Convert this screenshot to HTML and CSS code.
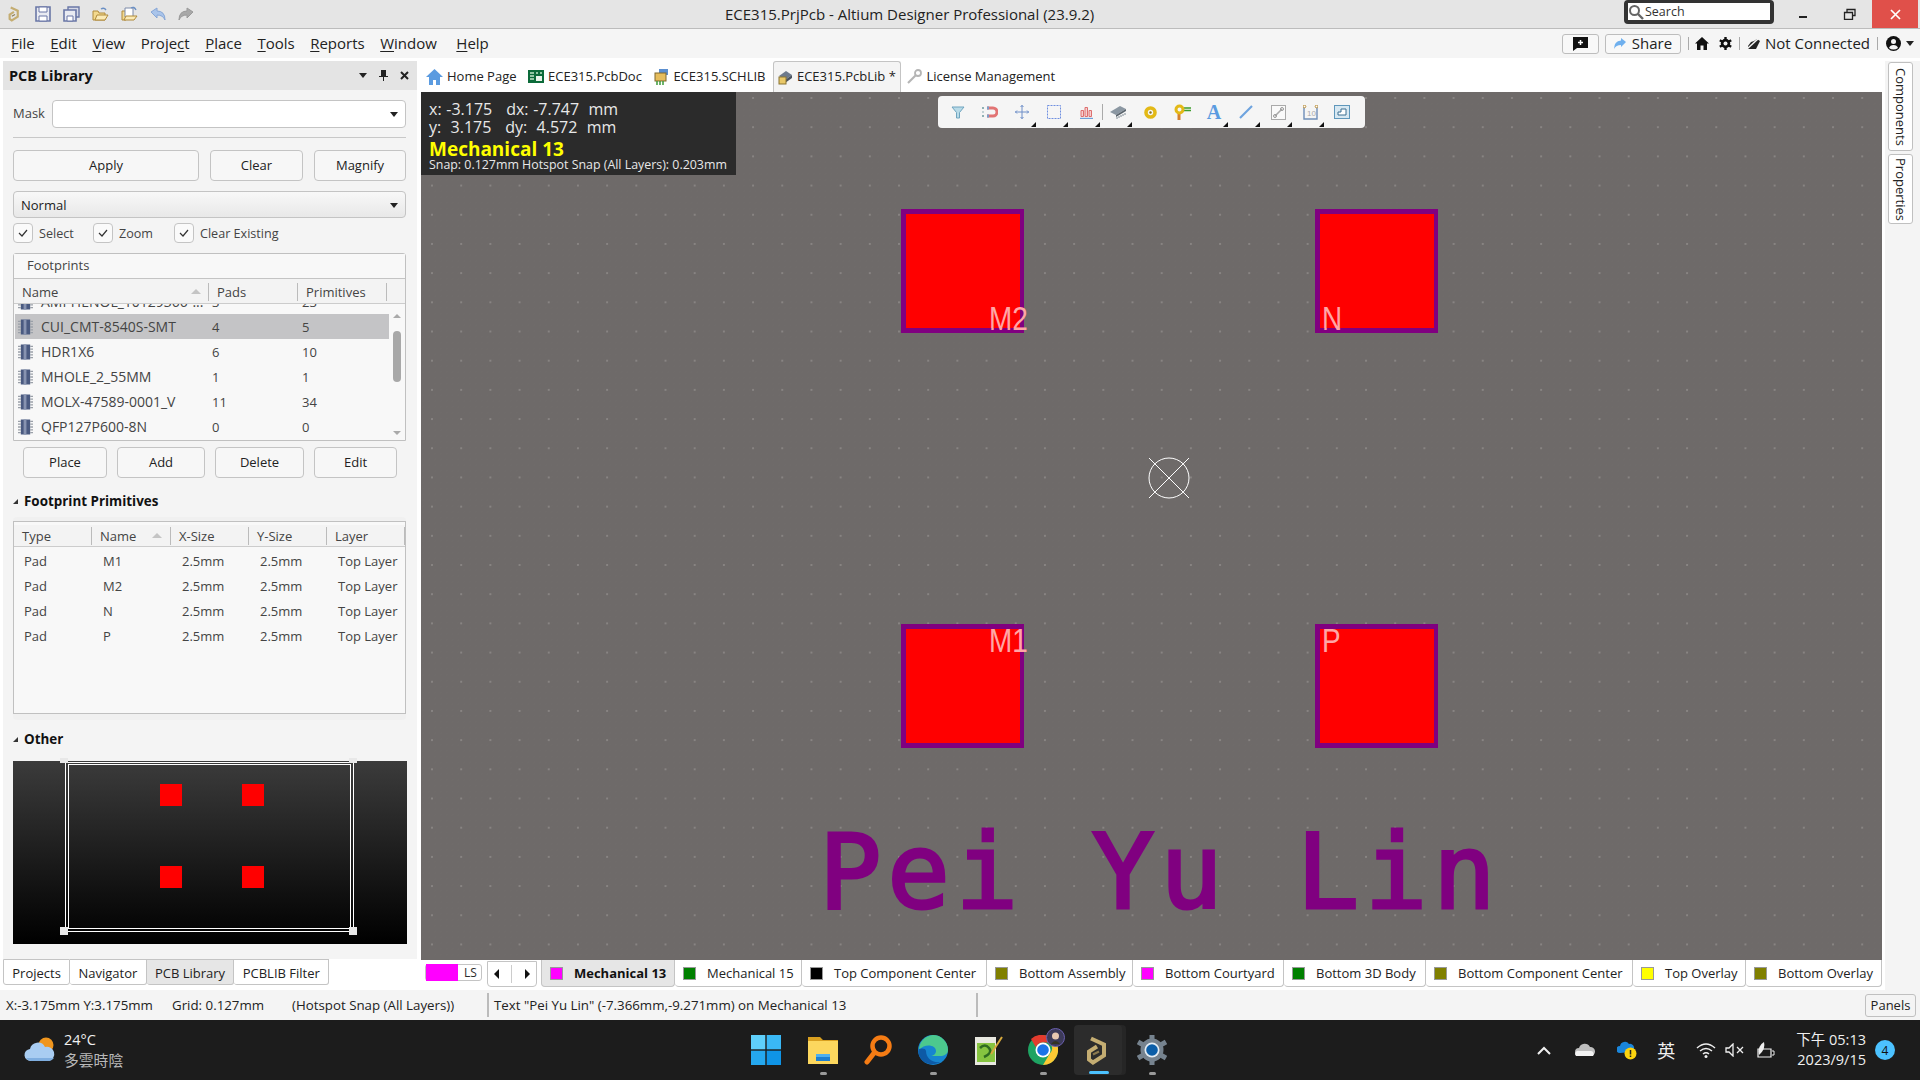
FILE: index.html
```html
<!DOCTYPE html>
<html lang="en">
<head>
    <meta charset="UTF-8">
    <title>ECE315.PrjPcb - Altium Designer Professional (23.9.2)</title>
    <link rel="stylesheet" href="styles.css">
</head>
<body>
    <svg class="defs" width="0" height="0">
        <symbol id="chip" viewBox="0 0 16 16">
            <rect x="3" y="0" width="10" height="16" fill="#4a5a80"/>
            <rect x="6" y="0" width="3" height="16" fill="#8793b0"/>
            <path d="M0 2h3M0 5h3M0 8h3M0 11h3M0 14h3M13 2h3M13 5h3M13 8h3M13 11h3M13 14h3" stroke="#9aa0a8" stroke-width="1.4"/>
        </symbol>
        <symbol id="logo" viewBox="0 0 24 30">
            <path d="M5 3l13 6v11l-11 7-4-3v-8l8-5" fill="none" stroke="#c4ad72" stroke-width="4"/>
            <path d="M7 19l6-3" stroke="#8c7a4e" stroke-width="2"/>
        </symbol>
    </svg>

    <header class="titlebar">
        <div class="quick-icons">
            <svg class="q-logo" width="13" height="20"><use href="#logo"/></svg>
            <svg width="16" height="16" viewBox="0 0 16 16"><path d="M1 1h14v14H1z" fill="#e9ebf2" stroke="#6a77a6" stroke-width="1.6"/><path d="M4 1h8v5H4zM4 10h8v5H4z" fill="#fff" stroke="#6a77a6"/></svg>
            <svg width="17" height="16" viewBox="0 0 17 16"><path d="M5 1h11v10H5z" fill="#d5d8e6" stroke="#6a77a6" stroke-width="1.4"/><path d="M1 4h12v11H1z" fill="#e9ebf2" stroke="#6a77a6" stroke-width="1.6"/><path d="M4 10h6v5H4z" fill="#fff" stroke="#6a77a6"/></svg>
            <svg width="17" height="16" viewBox="0 0 17 16"><path d="M1 14V5h5l1 2h6v7z" fill="#f3d98e" stroke="#b08a3a"/><path d="M3 14l2-5h11l-3 5z" fill="#fbeab5" stroke="#b08a3a"/><path d="M9 3q3-2 5 1" fill="none" stroke="#6a8fc4" stroke-width="1.4"/></svg>
            <svg width="17" height="16" viewBox="0 0 17 16"><path d="M1 14V5h4v9z" fill="#f3d98e" stroke="#b08a3a"/><path d="M4 2h8v9H4z" fill="#fff" stroke="#7c8aa8"/><path d="M3 14l2-4h11l-3 4z" fill="#fbeab5" stroke="#b08a3a"/><path d="M10 2q3-2 5 2" fill="none" stroke="#6a8fc4" stroke-width="1.4"/></svg>
            <svg width="16" height="14" viewBox="0 0 16 14"><path d="M1 5l6-4v3q8 0 8 9-2-5-8-5v3z" fill="#a9c4ea" stroke="#86a6d6"/></svg>
            <svg width="16" height="14" viewBox="0 0 16 14"><path d="M15 5L9 1v3Q1 4 1 13q2-5 8-5v3z" fill="#a8a8a8" stroke="#999"/></svg>
        </div>
        <div class="app-title">ECE315.PrjPcb - Altium Designer Professional (23.9.2)</div>
        <div class="search-box">
            <svg width="16" height="16" viewBox="0 0 16 16"><circle cx="6.5" cy="6.5" r="4.5" fill="none" stroke="#666" stroke-width="2"/><path d="M10 10l5 5" stroke="#666" stroke-width="2.4"/></svg>
            <span>Search</span>
        </div>
        <div class="win-btn"><svg width="10" height="10"><path d="M1 8h8" stroke="#222" stroke-width="2"/></svg></div>
        <div class="win-btn"><svg width="13" height="12"><path d="M1.5 4.5h8v7h-8zM4 4V1.5h8v6h-2" fill="none" stroke="#222" stroke-width="1.3"/></svg></div>
        <div class="win-btn close-btn"><svg width="11" height="11"><path d="M1 1l9 9M10 1l-9 9" stroke="#fff" stroke-width="1.7"/></svg></div>
    </header>

    <nav class="menubar">
        <span class="menu-item"><u>F</u>ile</span>
        <span class="menu-item"><u>E</u>dit</span>
        <span class="menu-item"><u>V</u>iew</span>
        <span class="menu-item">Proje<u>c</u>t</span>
        <span class="menu-item"><u>P</u>lace</span>
        <span class="menu-item"><u>T</u>ools</span>
        <span class="menu-item"><u>R</u>eports</span>
        <span class="menu-item"><u>W</u>indow</span>
        <span class="menu-item help-item"><u>H</u>elp</span>
        <div class="menu-right">
            <div class="top-btn chat-btn"><svg width="17" height="16" viewBox="0 0 17 16"><path d="M1 1h15v11H5l-4 3z" fill="#111"/><path d="M8.500 4v5M6 6.500h5" stroke="#fff" stroke-width="1.500"/></svg></div>
            <div class="top-btn share-btn"><svg width="12" height="11" viewBox="0 0 12 11"><path d="M12 4L7 0v2.500Q0 3 0 11q2-4 7-4v2z" fill="#6fb0ee"/></svg><span>Share</span></div>
            <i class="menu-sep sep-a"></i>
            <svg class="ic-home" width="14" height="13" viewBox="0 0 14 13"><path d="M7 0L0 6.500h2V13h3.500V8.500h3V13H12V6.500h2z" fill="#111"/></svg>
            <svg class="ic-gear" width="13" height="13" viewBox="0 0 13 13"><path d="M6.500 0v13M.8 3.200l11.400 6.600M.8 9.800l11.400-6.600" stroke="#111" stroke-width="2.400"/><circle cx="6.500" cy="6.500" r="4.700" fill="#111"/><circle cx="6.500" cy="6.500" r="2" fill="#f5f5f5"/></svg>
            <i class="menu-sep sep-b"></i>
            <svg class="ic-cloud" width="14" height="12" viewBox="0 0 14 12"><path d="M1 11h8l4-8-3-2-3 2-3 1-3 4z" fill="#222"/><path d="M0 11L12 0" stroke="#f5f5f5" stroke-width="1.500"/></svg>
            <span class="not-connected">Not Connected</span>
            <i class="menu-sep sep-c"></i>
            <svg class="ic-user" width="15" height="15" viewBox="0 0 15 15"><circle cx="7.500" cy="7.500" r="7.500" fill="#111"/><circle cx="7.500" cy="5.500" r="2.500" fill="#f5f5f5"/><path d="M3 12q1-3 4.500-3t4.500 3q-2 1.500-4.500 1.500T3 12" fill="#f5f5f5"/></svg>
            <i class="caret-down user-caret"></i>
        </div>
    </nav>

    <div class="workspace">
        <div class="left-col">
            <section class="panel">
                <div class="panel-head">
                    <strong>PCB Library</strong>
                    <div class="panel-tools">
                        <i class="caret-down"></i>
                        <svg width="9" height="11"><path d="M2 0h5v6h2v1H5v4H4V7H0V6h2z" fill="#222"/></svg>
                        <svg width="9" height="9"><path d="M1 1l7 7M8 1L1 8" stroke="#222" stroke-width="2"/></svg>
                    </div>
                </div>
                <div class="panel-body">
                    <div class="mask-row">
                        <label>Mask</label>
                        <div class="mask-input"><i class="caret-down"></i></div>
                    </div>
                    <div class="hr"></div>
                    <div class="btn-row apply-row">
                        <div class="btn w-apply">Apply</div>
                        <div class="btn w-clear">Clear</div>
                        <div class="btn w-magnify">Magnify</div>
                    </div>
                    <div class="select-normal"><span>Normal</span><i class="caret-down"></i></div>
                    <div class="check-row">
                        <span class="check w-sel"><i class="box"><svg width="10" height="8"><path d="M1 4l3 3 5-6" fill="none" stroke="#333" stroke-width="1.200"/></svg></i>Select</span>
                        <span class="check w-zoom"><i class="box"><svg width="10" height="8"><path d="M1 4l3 3 5-6" fill="none" stroke="#333" stroke-width="1.200"/></svg></i>Zoom</span>
                        <span class="check"><i class="box"><svg width="10" height="8"><path d="M1 4l3 3 5-6" fill="none" stroke="#333" stroke-width="1.200"/></svg></i>Clear Existing</span>
                    </div>

                    <div class="fp-box">
                        <div class="fp-title">Footprints</div>
                        <div class="fp-head">
                            <span class="fp-col-name">Name<i class="sort-up"></i></span>
                            <span class="fp-col-pads">Pads</span>
                            <span class="fp-col-prim">Primitives</span>
                        </div>
                        <div class="fp-list">
                            <div class="fp-row clipped"><svg width="15" height="16"><use href="#chip"/></svg><span class="fp-col-name">AMPHENOL_10129366-...</span><span class="fp-col-pads">3</span><span class="fp-col-prim">23</span></div>
                            <div class="fp-row selected"><svg width="15" height="16"><use href="#chip"/></svg><span class="fp-col-name">CUI_CMT-8540S-SMT</span><span class="fp-col-pads">4</span><span class="fp-col-prim">5</span></div>
                            <div class="fp-row"><svg width="15" height="16"><use href="#chip"/></svg><span class="fp-col-name">HDR1X6</span><span class="fp-col-pads">6</span><span class="fp-col-prim">10</span></div>
                            <div class="fp-row"><svg width="15" height="16"><use href="#chip"/></svg><span class="fp-col-name">MHOLE_2_55MM</span><span class="fp-col-pads">1</span><span class="fp-col-prim">1</span></div>
                            <div class="fp-row"><svg width="15" height="16"><use href="#chip"/></svg><span class="fp-col-name">MOLX-47589-0001_V</span><span class="fp-col-pads">11</span><span class="fp-col-prim">34</span></div>
                            <div class="fp-row"><svg width="15" height="16"><use href="#chip"/></svg><span class="fp-col-name">QFP127P600-8N</span><span class="fp-col-pads">0</span><span class="fp-col-prim">0</span></div>
                            <div class="scroll-v">
                                <i class="arrow-up"></i>
                                <i class="thumb"></i>
                                <i class="arrow-down"></i>
                            </div>
                        </div>
                    </div>

                    <div class="btn-row place-row">
                        <div class="btn w-place">Place</div>
                        <div class="btn w-add">Add</div>
                        <div class="btn w-delete">Delete</div>
                        <div class="btn w-edit">Edit</div>
                    </div>

                    <h3 class="section-head first"><i></i>Footprint Primitives</h3>
                    <div class="prim-wrap">
                        <div class="prim-table">
                            <div class="prim-row prim-head">
                                <span>Type</span><span>Name<i class="sort-up"></i></span><span>X-Size</span><span>Y-Size</span><span>Layer</span>
                            </div>
                            <div class="prim-row"><span>Pad</span><span>M1</span><span>2.5mm</span><span>2.5mm</span><span>Top Layer</span></div>
                            <div class="prim-row"><span>Pad</span><span>M2</span><span>2.5mm</span><span>2.5mm</span><span>Top Layer</span></div>
                            <div class="prim-row"><span>Pad</span><span>N</span><span>2.5mm</span><span>2.5mm</span><span>Top Layer</span></div>
                            <div class="prim-row"><span>Pad</span><span>P</span><span>2.5mm</span><span>2.5mm</span><span>Top Layer</span></div>
                        </div>
                    </div>

                    <h3 class="section-head second"><i></i>Other</h3>
                    <div class="preview">
                        <div class="frame outer"></div>
                        <div class="frame inner"></div>
                        <i class="handle h-tl"></i><i class="handle h-tr"></i><i class="handle h-bl"></i><i class="handle h-br"></i>
                        <i class="mini-pad p1"></i><i class="mini-pad p2"></i><i class="mini-pad p3"></i><i class="mini-pad p4"></i>
                    </div>
                </div>
            </section>
            <div class="panel-tabs">
                <span class="ptab">Projects</span>
                <span class="ptab">Navigator</span>
                <span class="ptab active">PCB Library</span>
                <span class="ptab">PCBLIB Filter</span>
            </div>
        </div>

        <main class="docs">
            <div class="doc-tabs">
                <span class="dtab">
                    <svg width="17" height="16" viewBox="0 0 17 16"><path d="M8.500 0L0 8h3v8h4v-5h3v5h4V8h3z" fill="#5b9be0"/><path d="M7 11h3v5H7z" fill="#fff"/></svg><span>Home Page</span></span>
                <span class="dtab">
                    <svg width="16" height="13" viewBox="0 0 16 13"><rect width="16" height="13" fill="#0c6b3a"/><path d="M2 3h4M2 6h4M2 9h4M8 3h2M12 3h2" stroke="#bfe6c8" stroke-width="1.300"/><rect x="8" y="6" width="6" height="5" fill="#e8f4ea"/></svg><span>ECE315.PcbDoc</span></span>
                <span class="dtab">
                    <svg width="16" height="16" viewBox="0 0 16 16"><rect x="6" y="0" width="9" height="6" fill="#5b8fd0"/><rect x="2" y="4" width="11" height="8" fill="#e6bd5c" stroke="#80692c"/><path d="M4 12v4M7 12v4M10 12v4" stroke="#3d9a3a" stroke-width="1.500"/></svg><span>ECE315.SCHLIB</span></span>
                <span class="dtab active">
                    <svg width="15" height="15" viewBox="0 0 15 15"><path d="M1 6l7-5 6 4-7 5z" fill="#6d7a8c"/><path d="M7 10l7-5v3l-7 5z" fill="#49525f"/><rect x="1" y="7" width="7" height="7" fill="#e9c868" stroke="#8a7433"/></svg><span>ECE315.PcbLib *</span></span>
                <span class="dtab">
                    <svg width="15" height="15" viewBox="0 0 15 15"><circle cx="11" cy="4" r="3" fill="none" stroke="#b5b5b5" stroke-width="1.800"/><path d="M9 6l-8 8" stroke="#b5b5b5" stroke-width="2.200"/></svg><span>License Management</span></span>
            </div>

            <div class="canvas">
                <div class="hud">
                    <div class="hud-line">x: -3.175 &nbsp; dx: -7.747 &nbsp;mm</div>
                    <div class="hud-line">y: &nbsp;3.175 &nbsp; dy: &nbsp;4.572 &nbsp;mm</div>
                    <div class="hud-layer">Mechanical 13</div>
                    <div class="hud-snap">Snap: 0.127mm Hotspot Snap (All Layers): 0.203mm</div>
                </div>

                <div class="float-bar">
                    <span class="tool"><svg width="14" height="13" viewBox="0 0 14 13"><path d="M1 1h12L8.500 6.500V12h-3V6.500z" fill="#b9dbe8" stroke="#6ea4bf"/></svg></span>
                    <span class="tool"><svg width="16" height="12" viewBox="0 0 16 12"><path d="M5 2h6a4 4 0 010 8H5" fill="none" stroke="#e27474" stroke-width="3"/><path d="M5 2h2M5 10h2" stroke="#7d9dc9" stroke-width="3"/><path d="M1 1v2M1 5.500v1M1 9v2" stroke="#8fb0b5" stroke-width="2"/></svg></span>
                    <span class="tool more"><svg width="14" height="14" viewBox="0 0 14 14"><path d="M7 0v14M0 7h14M5.500 2L7 .5 8.500 2M5.500 12L7 13.500 8.500 12M2 5.500L.5 7 2 8.500M12 5.500L13.500 7 12 8.500" fill="none" stroke="#6e8fc8"/></svg></span>
                    <span class="tool more"><svg width="14" height="14"><rect x=".5" y=".5" width="13" height="13" fill="none" stroke="#6e8fe0" stroke-dasharray="2 1"/></svg></span>
                    <span class="tool more"><svg width="13" height="13" viewBox="0 0 13 13"><path d="M1 4.500h2.500v6H1zM5 1.500h2.500v9H5zM9 4.500h2.500v6H9z" fill="#f6cfcf" stroke="#dd6f6f"/><path d="M0 12.500h13" stroke="#6e9fd8" stroke-width="1.400"/></svg></span>
                    <i class="tool-sep"></i>
                    <span class="tool more"><svg width="16" height="14" viewBox="0 0 16 14"><path d="M0 7l10-6 6 3-10 6z" fill="#8b97a2"/><path d="M6 10l10-6v2L6 12z" fill="#59636c"/><path d="M7 12v2M9 11v2M11 10v2M13 9v2M15 8v2" stroke="#7f8a93"/></svg></span>
                    <span class="tool"><svg width="13" height="13"><circle cx="6.500" cy="6.500" r="4.500" fill="none" stroke="#e3b917" stroke-width="3.600"/><circle cx="6.500" cy="6.500" r="1.200" fill="#8a7420"/></svg></span>
                    <span class="tool"><svg width="17" height="16" viewBox="0 0 17 16"><path d="M5 9v7" stroke="#d7812a" stroke-width="3"/><path d="M10 4h7M10 6.500h7" stroke="#3e9f2d" stroke-width="1.600"/><circle cx="5.500" cy="5.500" r="3.500" fill="none" stroke="#e3b917" stroke-width="3"/></svg></span>
                    <span class="tool more tool-a">A</span>
                    <span class="tool more"><svg width="14" height="14"><path d="M1 13L13 1" stroke="#6ea3df" stroke-width="2.200"/></svg></span>
                    <span class="tool more"><svg width="15" height="15" viewBox="0 0 15 15"><rect x=".5" y=".5" width="14" height="14" fill="#fafafa" stroke="#aaa"/><path d="M4 11l7-7" stroke="#aaa" stroke-width="1.600"/><circle cx="4" cy="11" r="1.500" fill="none" stroke="#999"/><circle cx="11" cy="4" r="1.500" fill="none" stroke="#999"/></svg></span>
                    <span class="tool more"><svg width="15" height="15" viewBox="0 0 15 15"><path d="M1 2v12h13V2" fill="none" stroke="#6f8eb8" stroke-width="1.400"/><circle cx="1.500" cy="1.500" r="1.300" fill="#fff" stroke="#b98f3a"/><circle cx="13.500" cy="1.500" r="1.300" fill="#fff" stroke="#b98f3a"/><text x="4" y="11" font-size="8" fill="#aaa" font-family="Liberation Sans">10</text></svg></span>
                    <span class="tool"><svg width="16" height="14" viewBox="0 0 16 14"><rect x=".5" y=".5" width="15" height="13" fill="#d7e8f2" stroke="#5f97bb"/><path d="M4 10V7h3V4h5v6z" fill="#fff" stroke="#3a6e91"/></svg></span>
                </div>

                <div class="pad pad-m2"><span class="pad-label bottom right">M2</span></div>
                <div class="pad pad-n"><span class="pad-label bottom">N</span></div>
                <div class="pad pad-m1"><span class="pad-label top right">M1</span></div>
                <div class="pad pad-p"><span class="pad-label top">P</span></div>

                <svg class="origin" width="44" height="44" viewBox="0 0 44 44">
                    <circle cx="22" cy="22" r="20" fill="none" stroke="#fff"/>
                    <path d="M2 2l40 40M42 2L2 42" stroke="#fff"/>
                </svg>

                <div class="silk-text">Pei Yu Lin</div>
            </div>

            <div class="layer-bar">
                <div class="ls-box"><i class="ls-swatch"></i><span>LS</span></div>
                <div class="nav-box"><i class="tri-left"></i><i class="nav-sep"></i><i class="tri-right"></i></div>
                <span class="ltab active w-m13"><i class="swatch c-magenta"></i>Mechanical 13</span>
                <span class="ltab w-m15"><i class="swatch c-green"></i>Mechanical 15</span>
                <span class="ltab w-tcc"><i class="swatch c-black"></i>Top Component Center</span>
                <span class="ltab w-ba"><i class="swatch c-olive"></i>Bottom Assembly</span>
                <span class="ltab w-bc"><i class="swatch c-magenta"></i>Bottom Courtyard</span>
                <span class="ltab w-b3"><i class="swatch c-green"></i>Bottom 3D Body</span>
                <span class="ltab w-bcc"><i class="swatch c-olive"></i>Bottom Component Center</span>
                <span class="ltab w-to"><i class="swatch c-yellow"></i>Top Overlay</span>
                <span class="ltab w-bo"><i class="swatch c-olive"></i>Bottom Overlay</span>
            </div>
        </main>

        <aside class="right-strip">
            <div class="vtab v-comp"><span>Components</span></div>
            <div class="vtab v-prop"><span>Properties</span></div>
        </aside>
    </div>

    <footer class="statusbar">
        <span class="st-pos">X:-3.175mm Y:3.175mm</span>
        <span class="st-grid">Grid: 0.127mm</span>
        <span class="st-snap">(Hotspot Snap (All Layers))</span>
        <i class="st-sep"></i>
        <span class="st-msg">Text "Pei Yu Lin" (-7.366mm,-9.271mm) on Mechanical 13</span>
        <i class="st-sep st-sep2"></i>
        <span class="panels-btn">Panels</span>
    </footer>

    <div class="taskbar">
        <div class="weather">
            <svg width="32" height="26" viewBox="0 0 32 26"><circle cx="22" cy="8" r="7.500" fill="#f0961e"/><path d="M7 24a6 6 0 01-1-12 8 8 0 0115-2 7 7 0 014 14z" fill="#a9cdf2"/><path d="M7 24a6 6 0 01-5-3h28a7 7 0 01-5 3z" fill="#7faee0"/></svg>
            <div class="weather-text">
                <div>24°C</div>
                <div class="weather-sub">多雲時陰</div>
            </div>
        </div>
        <div class="task-icons">
            <span class="task-icon start">
                <svg width="30" height="30" viewBox="0 0 30 30"><rect width="14.300" height="14.300" fill="#5fd0fb"/><rect x="15.700" width="14.300" height="14.300" fill="#3ab8f5"/><rect y="15.700" width="14.300" height="14.300" fill="#25a8ef"/><rect x="15.700" y="15.700" width="14.300" height="14.300" fill="#0f94e6"/></svg>
            </span>
            <span class="task-icon running">
                <svg width="30" height="30" viewBox="0 0 30 30"><path d="M0 2h12l3 3h15v4H0z" fill="#d9a020"/><rect y="6" width="30" height="23" fill="#fcd75e"/><path d="M8 19h14v7H8z" fill="#1d7fd0"/><path d="M8 19h14v3H8z" fill="#4fb0ee"/></svg>
            </span>
            <span class="task-icon">
                <svg width="28" height="32" viewBox="0 0 28 32"><circle cx="17" cy="12" r="8.500" fill="none" stroke="#f57c14" stroke-width="4.500"/><path d="M10 19L3 28" stroke="#f57c14" stroke-width="5" stroke-linecap="round"/></svg>
            </span>
            <span class="task-icon running">
                <svg width="30" height="30" viewBox="0 0 30 30"><circle cx="15" cy="15" r="15" fill="#1685d0"/><path d="M15 0a15 15 0 0115 15c0 4-4 6-8 6H12c3 0 6-2 6-5 0-6-11-8-17-1A15 15 0 0115 0" fill="#4cc98e"/><path d="M8 16c0 7 6 12 14 11-5 3-12 3-17-1s-5-11-4-12c2-1 7-1 7 2" fill="#0d5aa6"/></svg>
            </span>
            <span class="task-icon">
                <svg width="30" height="32" viewBox="0 0 30 32"><rect x="2" y="3" width="21" height="28" fill="#e8e8e0"/><rect x="4" y="9" width="18" height="19" fill="#86c440"/><path d="M7 14q5-5 9 0t-5 9" fill="none" stroke="#2e6a20" stroke-width="2.500"/><path d="M18 20L29 3" stroke="#d7a93d" stroke-width="2"/></svg>
            </span>
            <span class="task-icon running chrome">
                <svg width="30" height="30" viewBox="0 0 30 30"><circle cx="15" cy="15" r="15" fill="#1ea362"/><path d="M15 0a15 15 0 0113 7.500H15a7.500 7.500 0 00-7 5L3 4a15 15 0 0112-4" fill="#e33b2e"/><path d="M28 7.500A15 15 0 0115 30l6.500-11a7.500 7.500 0 000-11.500z" fill="#fcc934"/><circle cx="15" cy="15" r="7.500" fill="#fff"/><circle cx="15" cy="15" r="5.800" fill="#1a73e8"/></svg>
                <svg class="chrome-badge" width="19" height="19" viewBox="0 0 19 19"><circle cx="9.500" cy="9.500" r="9" fill="#3c3a58" stroke="#6a5fb0"/><circle cx="9.500" cy="8" r="3.500" fill="#e8c8b0"/><path d="M5 16q4.500-6 9 0" fill="#332"/></svg>
            </span>
            <span class="task-icon altium">
                <svg width="24" height="31"><use href="#logo"/></svg>
                <i class="active-bar"></i>
            </span>
            <span class="task-icon running">
                <svg width="30" height="30" viewBox="0 0 30 30"><path d="M15 0v30M1 7l28 16M1 23L29 7" stroke="#76838f" stroke-width="5"/><circle cx="15" cy="15" r="11.500" fill="#76838f"/><circle cx="15" cy="15" r="7.500" fill="#e4edf4"/><circle cx="15" cy="15" r="5.800" fill="#0b5ea8"/></svg>
            </span>
        </div>
        <div class="tray">
            <svg class="tr-up" width="14" height="9"><path d="M1 8l6-6 6 6" fill="none" stroke="#f0f0f0" stroke-width="2"/></svg>
            <svg class="tr-cloud" width="21" height="14" viewBox="0 0 21 14"><path d="M5 13a4 4 0 010-8 6 6 0 0111-1 4.500 4.500 0 011 9z" fill="#bdbdbd"/><path d="M2 13a3 3 0 013-5h12a3 3 0 012 5z" fill="#f2f2f2"/></svg>
            <svg class="tr-drive" width="20" height="20" viewBox="0 0 20 20"><path d="M3 13a3 3 0 010-7 5 5 0 019-2 4 4 0 012 8z" fill="#1a86dc"/><circle cx="13.500" cy="13.500" r="6" fill="#fbd30f"/><path d="M13.500 10v4.500M13.500 15.500v1.500" stroke="#222" stroke-width="1.500"/></svg>
            <span class="tr-ime">英</span>
            <svg class="tr-wifi" width="20" height="16" viewBox="0 0 20 16"><path d="M1 6q9-8 18 0M4 9q6-5 12 0M7 12q3-2.500 6 0" fill="none" stroke="#f0f0f0" stroke-width="1.500"/><circle cx="10" cy="14.500" r="1.500" fill="#f0f0f0"/></svg>
            <svg class="tr-vol" width="20" height="14" viewBox="0 0 20 14"><path d="M1 5h3l4-4v12l-4-4H1z" fill="none" stroke="#f0f0f0" stroke-width="1.300"/><path d="M12 4l6 6M18 4l-6 6" stroke="#f0f0f0" stroke-width="1.300"/></svg>
            <svg class="tr-bat" width="20" height="18" viewBox="0 0 20 18"><path d="M3 8h13v8H3z" fill="none" stroke="#f0f0f0" stroke-width="1.200"/><path d="M17 10h2v4h-2" stroke="#f0f0f0"/><path d="M4 14Q2 5 9 1q2 7-5 13" fill="#f0f0f0"/></svg>
            <div class="clock">
                <div>下午 05:13</div>
                <div>2023/9/15</div>
            </div>
            <span class="notif">4</span>
        </div>
    </div>
</body>
</html>
```

FILE: styles.css
```css
* {
    box-sizing: border-box;
}
html, body {
    margin: 0;
    padding: 0;
    width: 1920px;
    height: 1080px;
    overflow: hidden;
}
body {
    font-family: "Open Sans", "Noto Sans CJK TC", sans-serif;
    font-size: 13px;
    color: #2c2c2c;
    background-color: #fff;
    display: flex;
    flex-direction: column;
}
i {
    font-style: normal;
}
.defs {
    position: absolute;
}

/* title bar */
.titlebar {
    height: 29px;
    flex: none;
    display: flex;
    background-color: #e5e5e5;
    border-bottom: 1px solid #bcbcbc;
    position: relative;
}
.quick-icons {
    display: flex;
    align-items: center;
    gap: 12px;
    padding-left: 8px;
    width: 1000px;
}
.quick-icons .q-logo {
    margin-right: 2px;
}
.app-title {
    position: absolute;
    left: 725px;
    top: 4px;
    font-size: 15px;
    color: #222;
    white-space: nowrap;
}
.search-box {
    margin-left: 624px;
    width: 150px;
    height: 24px;
    display: flex;
    align-items: center;
    background-color: #fff;
    border: 4px solid #333;
    border-radius: 4px;
    border-top-width: 3px;
    font-size: 12.5px;
    gap: 1px;
    color: #333;
    flex: none;
}
.win-btn {
    width: 46px;
    height: 28px;
    flex: none;
    display: flex;
    align-items: center;
    justify-content: center;
}
.search-box + .win-btn {
    margin-left: 6px;
}
.close-btn {
    background-color: #e0504a;
}

/* menu bar */
.menubar {
    height: 29px;
    flex: none;
    display: flex;
    align-items: center;
    padding: 0 0 2px 11px;
    background-color: #f5f5f5;
    font-size: 15px;
    color: #222;
    gap: 15.500px;
}
.menu-item u {
    text-underline-offset: 2px;
}
.help-item {
    margin-left: 4px;
}
.menu-right {
    position: absolute;
    left: 1562px;
    top: 29px;
    height: 29px;
    display: flex;
    align-items: center;
}
.menu-right span {
    margin-top: -2px;
}
.top-btn {
    height: 20px;
    border: 1px solid #bdbdbd;
    border-radius: 3px;
    background-color: #f8f8f8;
    display: flex;
    align-items: center;
    justify-content: center;
}
.chat-btn {
    width: 37px;
}
.share-btn {
    width: 76px;
    margin-left: 6px;
    gap: 6px;
}
.menu-sep {
    width: 1px;
    height: 13px;
    background-color: #aaa;
}
.sep-a {
    margin-left: 7px;
}
.ic-home {
    margin-left: 6px;
}
.ic-gear {
    margin-left: 10px;
}
.sep-b {
    margin-left: 7px;
}
.ic-cloud {
    margin-left: 7px;
}
.not-connected {
    margin-left: 4px;
    white-space: nowrap;
}
.sep-c {
    margin-left: 7px;
}
.ic-user {
    margin-left: 8px;
}
.user-caret {
    margin-left: 5px;
}
.caret-down {
    display: inline-block;
    width: 0;
    height: 0;
    border-left: 4px solid transparent;
    border-right: 4px solid transparent;
    border-top: 5px solid #222;
}

/* main area */
.workspace {
    height: 932px;
    flex: none;
    display: flex;
}
.left-col {
    width: 421px;
    flex: none;
    padding: 3px 4px 0 3px;
    display: flex;
    flex-direction: column;
}
.panel {
    height: 898px;
    background-color: #f4f4f4;
    display: flex;
    flex-direction: column;
}
.panel-head {
    height: 29px;
    background-color: #e4e4e4;
    display: flex;
    align-items: center;
    justify-content: space-between;
    padding: 0 8px 0 6px;
    font-size: 14.5px;
    color: #111;
}
.panel-tools {
    display: flex;
    align-items: center;
    gap: 12px;
}
.panel-body {
    padding: 0 11px 0 10px;
}
.mask-row {
    display: flex;
    align-items: center;
    margin-top: 10px;
    height: 28px;
}
.mask-row label {
    width: 39px;
    color: #444;
    padding-bottom: 2px;
}
.mask-input {
    flex: 1;
    height: 28px;
    background-color: #fff;
    border: 1px solid #c4c4c4;
    border-radius: 4px;
    display: flex;
    align-items: center;
    justify-content: flex-end;
    padding-right: 7px;
}
.hr {
    height: 1px;
    background-color: #c8c8c8;
    margin-top: 9px;
}
.btn-row {
    display: flex;
    height: 31px;
}
.apply-row {
    margin-top: 12px;
    gap: 11px;
}
.btn {
    border: 1px solid #c4c4c4;
    border-radius: 4px;
    background-color: #f7f7f7;
    display: flex;
    align-items: center;
    justify-content: center;
    color: #222;
    padding-bottom: 1px;
}
.w-apply { width: 186px; }
.w-clear { width: 93px; }
.w-magnify { width: 92px; }
.select-normal {
    margin-top: 10px;
    height: 27px;
    border: 1px solid #c4c4c4;
    border-radius: 4px;
    background: linear-gradient(#f8f8f8, #e8e8e8);
    display: flex;
    align-items: center;
    justify-content: space-between;
    padding: 1px 7px 0;
    color: #222;
}
.check-row {
    margin-top: 5px;
    height: 20px;
    display: flex;
    align-items: center;
    color: #444;
}
.check {
    display: flex;
    align-items: center;
    gap: 6px;
    font-size: 12.6px;
    line-height: 22px;
    padding-top: 1px;
}
.w-sel { width: 80px; }
.w-zoom { width: 81px; }
.box {
    width: 20px;
    height: 20px;
    margin-top: -1px;
    border: 1px solid #c4c4c4;
    border-radius: 4px;
    background-color: #fafafa;
    display: flex;
    align-items: center;
    justify-content: center;
}

/* footprints list */
.fp-box {
    margin-top: 10px;
    height: 188px;
    border: 1px solid #c0c0c0;
    border-radius: 3px 3px 0 0;
    background-color: #f8f8f8;
}
.fp-title {
    height: 25px;
    line-height: 22px;
    padding-left: 13px;
    background-color: #f8f8f8;
    border-bottom: 1px solid #c4c4c4;
    color: #444;
}
.fp-head {
    height: 25px;
    display: flex;
    align-items: center;
    background-color: #f3f3f3;
    border-bottom: 1px solid #ccc;
    color: #444;
    padding: 2px 0 0 8px;
}
.fp-head .fp-col-name {
    width: 187px;
    border-right: 1px solid #bbb;
    position: relative;
}
.fp-head .fp-col-pads {
    width: 89px;
    padding-left: 8px;
    border-right: 1px solid #bbb;
}
.fp-head .fp-col-prim {
    width: 89px;
    padding-left: 8px;
    border-right: 1px solid #bbb;
}
.sort-up {
    position: absolute;
    right: 7px;
    top: 6px;
    border-left: 5px solid transparent;
    border-right: 5px solid transparent;
    border-bottom: 5px solid #c4c4c4;
}
.fp-list {
    height: 136px;
    overflow: hidden;
    position: relative;
}
.fp-row {
    height: 25px;
    display: flex;
    align-items: center;
    padding-left: 3px;
    width: 374px;
    margin-left: 1px;
    color: #444;
}
.fp-row.clipped {
    margin-top: -15px;
}
.fp-row.selected {
    background-color: #c4c4c6;
}
.fp-row .fp-col-name {
    width: 179px;
    padding-left: 8px;
    font-size: 14px;
    white-space: nowrap;
    overflow: hidden;
}
.fp-row .fp-col-pads {
    width: 90px;
}
.scroll-v {
    position: absolute;
    right: 3px;
    top: 10px;
    bottom: 0;
    width: 10px;
}
.arrow-up, .arrow-down {
    position: absolute;
    left: 1px;
    border-left: 4px solid transparent;
    border-right: 4px solid transparent;
}
.arrow-up {
    top: 0;
    border-bottom: 4px solid #aaa;
}
.arrow-down {
    bottom: 5px;
    border-top: 4px solid #aaa;
}
.thumb {
    position: absolute;
    left: 1px;
    top: 17px;
    width: 8px;
    height: 51px;
    border-radius: 4px;
    background-color: #a8a8a8;
}
.place-row {
    margin-top: 6px;
    padding-left: 10px;
    gap: 10px;
}
.w-place { width: 84px; }
.w-add { width: 88px; }
.w-delete { width: 89px; }
.w-edit { width: 83px; }

/* primitives */
.section-head {
    margin: 0;
    height: 20px;
    display: flex;
    align-items: center;
    font-size: 13.400px;
    font-weight: 700;
    color: #111;
}
.section-head i {
    width: 0;
    height: 0;
    margin-right: 6px;
    border-left: 5px solid transparent;
    border-bottom: 5px solid #333;
}
.section-head.first {
    margin-top: 13px;
}
.section-head.second {
    margin-top: 9px;
}
.prim-wrap {
    margin-top: 6px;
    padding: 4px 0 6px;
    background-color: #f0f0f0;
    border-radius: 4px;
}
.prim-table {
    height: 193px;
    border: 1px solid #c0c0c0;
    background-color: #f8f8f8;
}
.prim-row {
    height: 25px;
    display: grid;
    grid-template-columns: 78px 79px 78px 78px 78px;
    align-items: center;
    padding-left: 10px;
    color: #444;
}
.prim-row span {
    white-space: nowrap;
}
.prim-row span + span {
    padding-left: 1px;
}
.prim-head {
    margin-top: 3px;
    height: 22px;
    background-color: #f3f3f3;
    border-bottom: 1px solid #ccc;
    padding-left: 8px;
    margin-bottom: 1px;
    grid-template-columns: 70px 79px 78px 78px 78px;
}
.prim-head span {
    border-right: 1px solid #bbb;
    position: relative;
}
.prim-head span + span {
    padding-left: 8px;
}
.prim-head .sort-up {
    right: 8px;
}

/* preview */
.preview {
    margin-top: 12px;
    height: 183px;
    width: 394px;
    background: linear-gradient(#3b3b3b, #000);
    position: relative;
}
.frame {
    position: absolute;
    border: 1px solid #fff;
}
.frame.outer {
    left: 52px;
    top: 1px;
    width: 289px;
    height: 170px;
}
.frame.inner {
    left: 55px;
    top: 3px;
    width: 283px;
    height: 165px;
}
.handle {
    position: absolute;
    width: 8px;
    height: 8px;
    background-color: #e8e8e8;
}
.h-tl { left: 47px; top: -3px; height: 5px; }
.h-tr { left: 336px; top: -3px; height: 5px; }
.h-bl { left: 47px; top: 166px; }
.h-br { left: 336px; top: 166px; }
.mini-pad {
    position: absolute;
    width: 22px;
    height: 22px;
    background-color: #f00;
}
.p1 { left: 147px; top: 23px; }
.p2 { left: 229px; top: 23px; }
.p3 { left: 147px; top: 105px; }
.p4 { left: 229px; top: 105px; }

.panel-tabs {
    display: flex;
    height: 26px;
}
.ptab {
    border: 1px solid #c4c4c4;
    border-left-width: 0;
    border-radius: 0 0 3px 3px;
    display: flex;
    align-items: center;
    justify-content: center;
    color: #222;
    padding: 1px 8.300px 0;
    background-color: #fff;
}
.ptab:first-child {
    border-left-width: 1px;
}
.ptab.active {
    background-color: #e6e6e6;
}

/* documents */
.docs {
    width: 1461px;
    flex: none;
    display: flex;
    flex-direction: column;
}
.doc-tabs {
    height: 34px;
    flex: none;
    display: flex;
    align-items: flex-end;
    padding-left: 5px;
    color: #222;
}
.dtab {
    height: 31px;
    display: flex;
    align-items: center;
    gap: 4px;
    padding-right: 11.500px;
    white-space: nowrap;
    font-size: 13px;
}
.dtab span {
    margin-top: -2px;
}
.dtab.active {
    background-color: #f4f4f4;
    border: 1px solid #c4c4c4;
    border-bottom: 0;
    border-radius: 3px 3px 0 0;
    padding: 0 4px;
    margin: 0 6.500px 0 -4px;
}
.canvas {
    height: 868px;
    flex: none;
    position: relative;
    background-color: #6e6a69;
    background-image:
        radial-gradient(circle, #a8a4a2 0.55px, transparent 0.8px),
        radial-gradient(circle, #807c7b 0.4px, transparent 0.7px);
    background-size: 29.2px 29.2px, 5.84px 5.84px;
    background-position: -3.6px -8.6px, -0.6px -2.6px;
    overflow: hidden;
}
.hud {
    position: absolute;
    left: 0;
    top: 0;
    width: 315px;
    height: 83px;
    background-color: #2b2b2b;
    color: #e8e8e8;
    padding: 8px 8px;
}
.hud-line {
    font-size: 16px;
    line-height: 18px;
    word-spacing: 0.5px;
}
.hud-layer {
    font-size: 19px;
    font-weight: 700;
    line-height: 21px;
    margin-top: 3px;
    color: #ff0;
}
.hud-snap {
    font-size: 12.400px;
    line-height: 15px;
    margin-top: -3px;
}
.float-bar {
    position: absolute;
    left: 517px;
    top: 4px;
    width: 427px;
    height: 32px;
    background-color: #f5f5f5;
    border-radius: 4px;
    display: flex;
    align-items: center;
    padding-left: 4px;
}
.tool {
    width: 32px;
    height: 32px;
    flex: none;
    display: flex;
    align-items: center;
    justify-content: center;
    position: relative;
}
.tool.more::after {
    content: "";
    position: absolute;
    right: 2px;
    bottom: 1px;
    border-left: 5px solid transparent;
    border-bottom: 5px solid #111;
}
.tool-sep {
    width: 1px;
    height: 16px;
    background-color: #aaa;
    margin: 0 -1px 0 0;
}
.tool-a {
    font-family: "Liberation Serif", serif;
    font-weight: 700;
    font-size: 20px;
    color: #5b9be0;
}
.pad {
    position: absolute;
    width: 123px;
    height: 124px;
    background-color: #f00;
    border: 5px solid #800080;
    border-right-width: 4px;
}
.pad-m2 { left: 480px; top: 117px; }
.pad-n { left: 894px; top: 117px; }
.pad-m1 { left: 480px; top: 532px; }
.pad-p { left: 894px; top: 532px; }
.pad-label {
    position: absolute;
    left: 2px;
    font-family: "Liberation Sans", sans-serif;
    font-size: 34px;
    line-height: 34px;
    color: #ffa6a6;
    transform: scaleX(0.82);
    transform-origin: left top;
    white-space: nowrap;
}
.pad-label.right {
    left: 83px;
}
.pad-label.bottom {
    bottom: -7px;
}
.pad-label.top {
    top: -6px;
}
.origin {
    position: absolute;
    left: 726px;
    top: 364px;
}
.silk-text {
    position: absolute;
    left: 398px;
    top: 715px;
    font-family: "DejaVu Sans Mono", monospace;
    font-size: 104px;
    line-height: 130px;
    letter-spacing: 5.600px;
    color: #800080;
    -webkit-text-stroke: 3px #800080;
    white-space: pre;
}

/* layer tabs */
.layer-bar {
    height: 27px;
    flex: none;
    display: flex;
    align-items: stretch;
}
.ls-box {
    margin: 4px 0 6px 4px;
    width: 57px;
    border: 1px solid #c4c4c4;
    border-radius: 3px;
    display: flex;
    align-items: center;
    font-size: 12px;
}
.ls-swatch {
    width: 32px;
    height: 17px;
    background-color: #f0f;
    margin-right: 6px;
}
.nav-box {
    width: 50px;
    margin: 1px 4px 0 5px;
    border: 1px solid #c4c4c4;
    border-radius: 0 0 4px 4px;
    display: flex;
    align-items: center;
    justify-content: space-around;
}
.nav-sep {
    width: 1px;
    height: 18px;
    background-color: #ccc;
}
.tri-left {
    border-top: 5px solid transparent;
    border-bottom: 5px solid transparent;
    border-right: 5px solid #111;
}
.tri-right {
    border-top: 5px solid transparent;
    border-bottom: 5px solid transparent;
    border-left: 5px solid #111;
}
.ltab {
    display: flex;
    align-items: center;
    padding-left: 8px;
    border: 1px solid #c4c4c4;
    border-top: 0;
    border-left-width: 0;
    border-radius: 0 0 4px 4px;
    font-size: 13px;
    color: #222;
    white-space: nowrap;
    overflow: hidden;
}
.ltab.active {
    background-color: #e6e6e6;
    font-weight: 700;
    color: #111;
    border-left-width: 1px;
}
.w-m13 { width: 134px; }
.w-m15 { width: 127px; }
.w-tcc { width: 185px; }
.w-ba { width: 146px; }
.w-bc { width: 151px; }
.w-b3 { width: 142px; }
.w-bcc { width: 207px; }
.w-to { width: 113px; }
.w-bo { width: 136px; }
.swatch {
    width: 13px;
    height: 13px;
    margin-right: 11px;
    flex: none;
    border: 1px solid #999;
}
.c-magenta { background-color: #f0f; }
.c-green { background-color: #008000; }
.c-black { background-color: #000; }
.c-olive { background-color: #808000; }
.c-yellow { background-color: #ff0; }

/* right side tabs */
.right-strip {
    flex: 1;
    margin: 3px 0 0 3px;
    background-color: #f4f4f4;
    padding: 1px 0 0 3px;
}
.vtab {
    width: 25px;
    border: 1px solid #c0c0c0;
    border-radius: 3px;
    background-color: #fff;
    display: flex;
    align-items: center;
    justify-content: center;
    margin-bottom: 3px;
    color: #222;
}
.vtab span {
    writing-mode: vertical-rl;
}
.v-comp { height: 89px; }
.v-prop { height: 70px; }

/* status bar */
.statusbar {
    height: 30px;
    flex: none;
    display: flex;
    align-items: center;
    background-color: #f4f4f4;
    color: #222;
    font-size: 13.300px;
    position: relative;
}
.statusbar span {
    white-space: nowrap;
}
.st-pos { margin-left: 6px; width: 166px; }
.st-grid { width: 120px; }
.st-snap { width: 195px; }
.st-sep {
    width: 2px;
    height: 24px;
    background-color: #bbb;
}
.st-msg {
    margin-left: 5px;
    width: 480px;
}
.st-sep2 {
    margin-left: 2px;
}
.panels-btn {
    margin-left: auto;
    margin-right: 4px;
    width: 51px;
    height: 23px;
    border: 1px solid #c0c0c0;
    border-radius: 3px;
    display: flex;
    align-items: center;
    justify-content: center;
    font-size: 13px;
}

/* taskbar */
.taskbar {
    height: 60px;
    flex: none;
    display: flex;
    align-items: center;
    background-color: #1c1c1c;
    color: #f0f0f0;
    position: relative;
}
.weather {
    width: 738px;
    flex: none;
    display: flex;
    align-items: center;
    padding-left: 24px;
    gap: 8px;
    font-size: 14.500px;
}
.weather-text {
    line-height: 20px;
}
.weather-sub {
    color: #b8b8b8;
    font-size: 14.800px;
}
.task-icons {
    display: flex;
    align-items: center;
    height: 60px;
}
.task-icon {
    width: 55px;
    height: 60px;
    flex: none;
    display: flex;
    align-items: center;
    justify-content: center;
    position: relative;
}
.task-icon.start {
    margin-right: 2.500px;
}
.task-icon.running::after {
    content: "";
    position: absolute;
    left: 24px;
    bottom: 5px;
    width: 7px;
    height: 3px;
    border-radius: 2px;
    background-color: #9a9a9a;
}
.chrome-badge {
    position: absolute;
    left: 30px;
    top: 8px;
}
.altium {
    width: 48px;
    height: 50px;
    margin: 0 3px;
    background-color: #2c2c2c;
    border-radius: 4px;
    box-shadow: 4px 0 0 #262626;
}
.active-bar {
    position: absolute;
    left: 15px;
    bottom: 1px;
    width: 20px;
    height: 3px;
    border-radius: 2px;
    background-color: #4cc2ff;
}
.tray {
    position: absolute;
    right: 0;
    top: 0;
    height: 60px;
    display: flex;
    align-items: center;
    padding-right: 25px;
}
.tr-cloud { margin-left: 23px; }
.tr-drive { margin-left: 22px; }
.tr-ime { margin-left: 20px; font-size: 18px; }
.tr-wifi { margin-left: 21px; }
.tr-vol { margin-left: 9px; }
.tr-bat { margin-left: 10px; }
.clock {
    margin-left: 21px;
    text-align: right;
    font-size: 14.500px;
    line-height: 20px;
    white-space: nowrap;
}
.notif {
    margin-left: 9px;
    width: 20px;
    height: 20px;
    border-radius: 50%;
    background-color: #4cc2ff;
    color: #111;
    font-size: 12px;
    display: flex;
    align-items: center;
    justify-content: center;
}
```
